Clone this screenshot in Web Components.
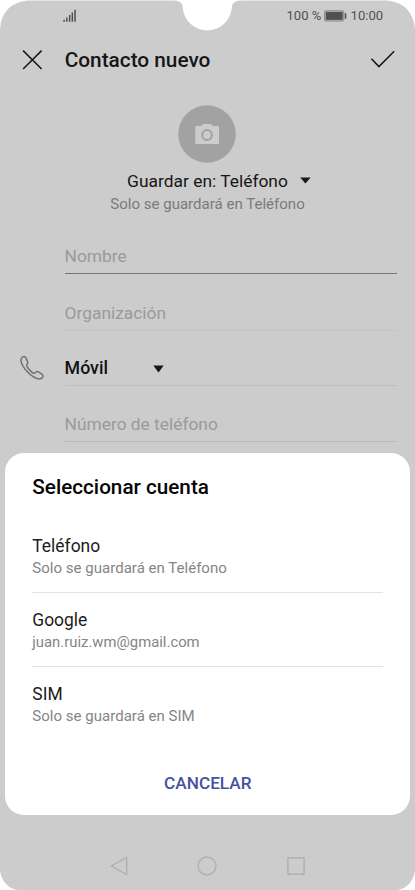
<!DOCTYPE html>
<html lang="es">
<head>
<meta charset="utf-8">
<title>Contacto nuevo</title>
<style>
body{margin:0;background:#fff;font-family:Roboto,"Liberation Sans",sans-serif;color:#161616}
</style>
</head>
<body>
<phone-screen>
  <status-bar battery="100 %" time="10:00"></status-bar>
  <title-bar>Contacto nuevo</title-bar>
  <contact-photo></contact-photo>
  <save-target note="Solo se guardará en Teléfono">Guardar en: Teléfono</save-target>
  <contact-form>
    <form-field active>Nombre</form-field>
    <form-field style="--h:57px;--line:#c2c2c2">Organización</form-field>
    <form-field picker style="--h:55px">Móvil</form-field>
    <form-field style="--h:56px;--line:#b8b8b8">Número de teléfono</form-field>
  </contact-form>
  <account-sheet slot="over" heading="Seleccionar cuenta" action="CANCELAR">
    <account-option detail="Solo se guardará en Teléfono">Teléfono</account-option>
    <account-option detail="juan.ruiz.wm@gmail.com" style="--detail:14.85px">Google</account-option>
    <account-option detail="Solo se guardará en SIM">SIM</account-option>
  </account-sheet>
  <nav-bar slot="nav"></nav-bar>
</phone-screen>
<script>
const define = (name, render) => customElements.define(name, class extends HTMLElement {
  connectedCallback() {
    if (!this.shadowRoot) this.attachShadow({mode: 'open'}).innerHTML = render(this);
  }
});

define('phone-screen', () => `
<style>
:host{display:flex;flex-direction:column;position:relative;width:415px;height:890px;overflow:hidden}
.shell{position:absolute;inset:0;z-index:-1}
.over{position:absolute;left:5px;top:453px;width:405.3px}
.nav{margin-top:auto}
</style>
<svg class="shell" width="415" height="890" viewBox="0 0 415 890">
  <path fill="#ccc" d="M0 29Q2 3 28 .4H174Q182.600 .4 182.800 8A24.600 24.600 0 0 0 231.800 8Q232 .4 240.600 .4H387Q412.500 3 415 29V871Q412 887 398 890H17Q3 887 0 871Z"/>
</svg>
<slot></slot><div class="over"><slot name="over"></slot></div><div class="nav"><slot name="nav"></slot></div>`);

define('status-bar', el => `
<style>
:host{display:flex;align-items:center;height:32px;padding:0 31.900px 0 63px;font-size:13.050px;line-height:32px;color:#505050}
.signal{margin-right:auto}
.battery{margin:0 3.500px 0 2.800px}
</style>
<svg class="signal" width="14" height="14" viewBox="0 0 14 14" fill="#505050"><path d="M.3 10.700h1.600v2H.3zM3.100 8.500h1.500v4.200H3.100zM5.900 6h1.500v6.700H5.900zM8.600 3.500h1.500v9.200H8.600zM11.300.8h1.500v11.900H11.300z"/></svg>
<span>${el.getAttribute('battery')}</span>
<svg class="battery" width="23" height="12" viewBox="0 0 23 12"><rect x=".6" y=".8" width="19.200" height="10.200" rx="1.200" fill="#c2c2c2" stroke="#777" stroke-width=".8"/><rect x="1.700" y="1.900" width="17" height="8" fill="#505050"/><path d="M20.800 3.200h.9q.6 0 .6.6v4.400q0 .6-.6.6h-.9z" fill="#505050"/></svg>
<span>${el.getAttribute('time')}</span>`);

define('title-bar', () => `
<style>
:host{display:flex;align-items:center;height:56px;padding:0 20.500px 0 22px}
h1{margin:0 auto 0 21.700px;font:500 20.800px/28px Roboto,sans-serif}
svg{fill:none;stroke:#161616;stroke-width:1.500}
svg:first-child{margin-top:-1px}
</style>
<svg width="21" height="20" viewBox="0 0 21 20"><path d="M1.100.6 19.600 19M19.600.6 1.100 19"/></svg>
<h1><slot></slot></h1>
<svg width="25" height="20" viewBox="0 0 25 20"><path d="M1.400 8.700 8.900 16.600 24.200 1.300"/></svg>`);

define('contact-photo', () => `
<style>:host{display:flex;justify-content:center;padding:17px 1px 0 0;height:64px}</style>
<svg width="58" height="58" viewBox="0 0 58 58"><circle cx="29" cy="29" r="28.800" fill="#a2a2a2"/><path d="M18.200 20.900h5.200l1.600-2h8l1.600 2h5.700v.1q.7.200.7 1V38q0 1-1 1H18.300q-1 0-1-1V21.900q0-1 .9-1z" fill="#ccc"/><circle cx="29" cy="30" r="4.900" fill="none" stroke="#a2a2a2" stroke-width="2"/></svg>`);

define('save-target', el => `
<style>
:host{display:flex;flex-direction:column;align-items:center;height:73px}
.target{display:flex;align-items:center;gap:12.500px;margin-left:23.500px;font-size:17.400px;line-height:24px}
.note{font-size:15.050px;line-height:20px;padding-top:.5px;color:#7a7a7a}
</style>
<div class="target"><span><slot></slot></span><svg width="11" height="7" viewBox="0 0 11 7" style="margin-top:-2px"><path d="M.2.5h10.400L5.400 6.500z" fill="#161616"/></svg></div>
<div class="note">${el.getAttribute('note')}</div>`);

define('contact-form', () => `
<style>:host{display:block;padding:0 18.300px 0 64.600px}</style><slot></slot>`);

define('form-field', el => `
<style>
:host{display:flex;align-items:flex-end;position:relative;box-sizing:border-box;height:var(--h,32px);padding-bottom:5px;border-bottom:1px solid var(--line,#bebebe);font-size:17.350px;line-height:24px;color:#9a9a9a}
:host([active]){border-color:#747474}
:host([picker]){font-weight:500;font-size:17.800px;color:#121212}
.phone{position:absolute;left:-45.600px;bottom:4.500px}
.arrow{margin:0 0 7px 45.200px}
</style>
${el.hasAttribute('picker') ? '<svg class="phone" width="26" height="26" viewBox="0 0 26 26" fill="none" stroke="#707070" stroke-width="1.500" stroke-linejoin="round"><path d="M5.100 1.600C3.200 1.600 1.800 3.600 2 6C2.700 12 13 23.600 20 23.900C22.200 24 24.200 22.600 24 20.800Q23.800 19.700 22.600 18.800L19.400 16.900Q18.100 16.200 17 17L15.500 18Q14.500 18.500 13.300 17.600C11.500 16.100 9.200 13.700 8 11.700Q7.300 10.400 8 9.400Q9.300 8 8.600 6.700L6.900 2.900Q6.300 1.600 5.100 1.600Z"/></svg>' : ''}
<slot></slot>
${el.hasAttribute('picker') ? '<svg class="arrow" width="11" height="8" viewBox="0 0 11 8"><path d="M.3.6h10.400L5.500 7.500z" fill="#161616"/></svg>' : ''}`);

define('account-sheet', el => `
<style>
:host{display:flex;flex-direction:column;box-sizing:border-box;height:361.500px;padding:20px 27.500px 0 27.300px;border-radius:19px;background:#fff}
h2{margin:0 0 26px;font:500 20.700px/28px Roboto,sans-serif;color:#050505}
button{all:unset;align-self:center;margin:auto 0 20px .5px;font:500 17.200px/24px Roboto,sans-serif;color:#4552a1}
</style>
<h2>${el.getAttribute('heading')}</h2>
<slot></slot>
<button>${el.getAttribute('action')}</button>`);

define('account-option', el => `
<style>
:host{display:flex;flex-direction:column;box-sizing:border-box;height:74px;padding-top:8px;border-bottom:1px solid #e3e3e3;font-size:17.450px;line-height:24px;color:#1c1c1c}
:host(:first-of-type){padding-top:7px;height:66px}
:host(:last-of-type){border:0}
:host(:not(:first-of-type)){padding-top:15px}
small{font-size:var(--detail,15.050px);line-height:20px;color:#858585}
</style>
<span><slot></slot></span>
<small>${el.getAttribute('detail')}</small>`);

define('nav-bar', () => `
<style>
:host{display:flex;justify-content:space-between;padding:0 110.500px 14px 109.500px}
svg{fill:none;stroke:#b0b0b0;stroke-width:1.400;stroke-linejoin:round}
</style>
<svg width="18" height="20" viewBox="0 0 18 20"><path d="M16.700 1.300V18.700L1.300 10Z"/></svg>
<svg width="20" height="20" viewBox="0 0 20 20"><circle cx="10" cy="10" r="9"/></svg>
<svg width="18" height="20" viewBox="0 0 18 20"><rect x=".9" y="1.800" width="16.200" height="16.400"/></svg>`);
</script>
</body>
</html>
